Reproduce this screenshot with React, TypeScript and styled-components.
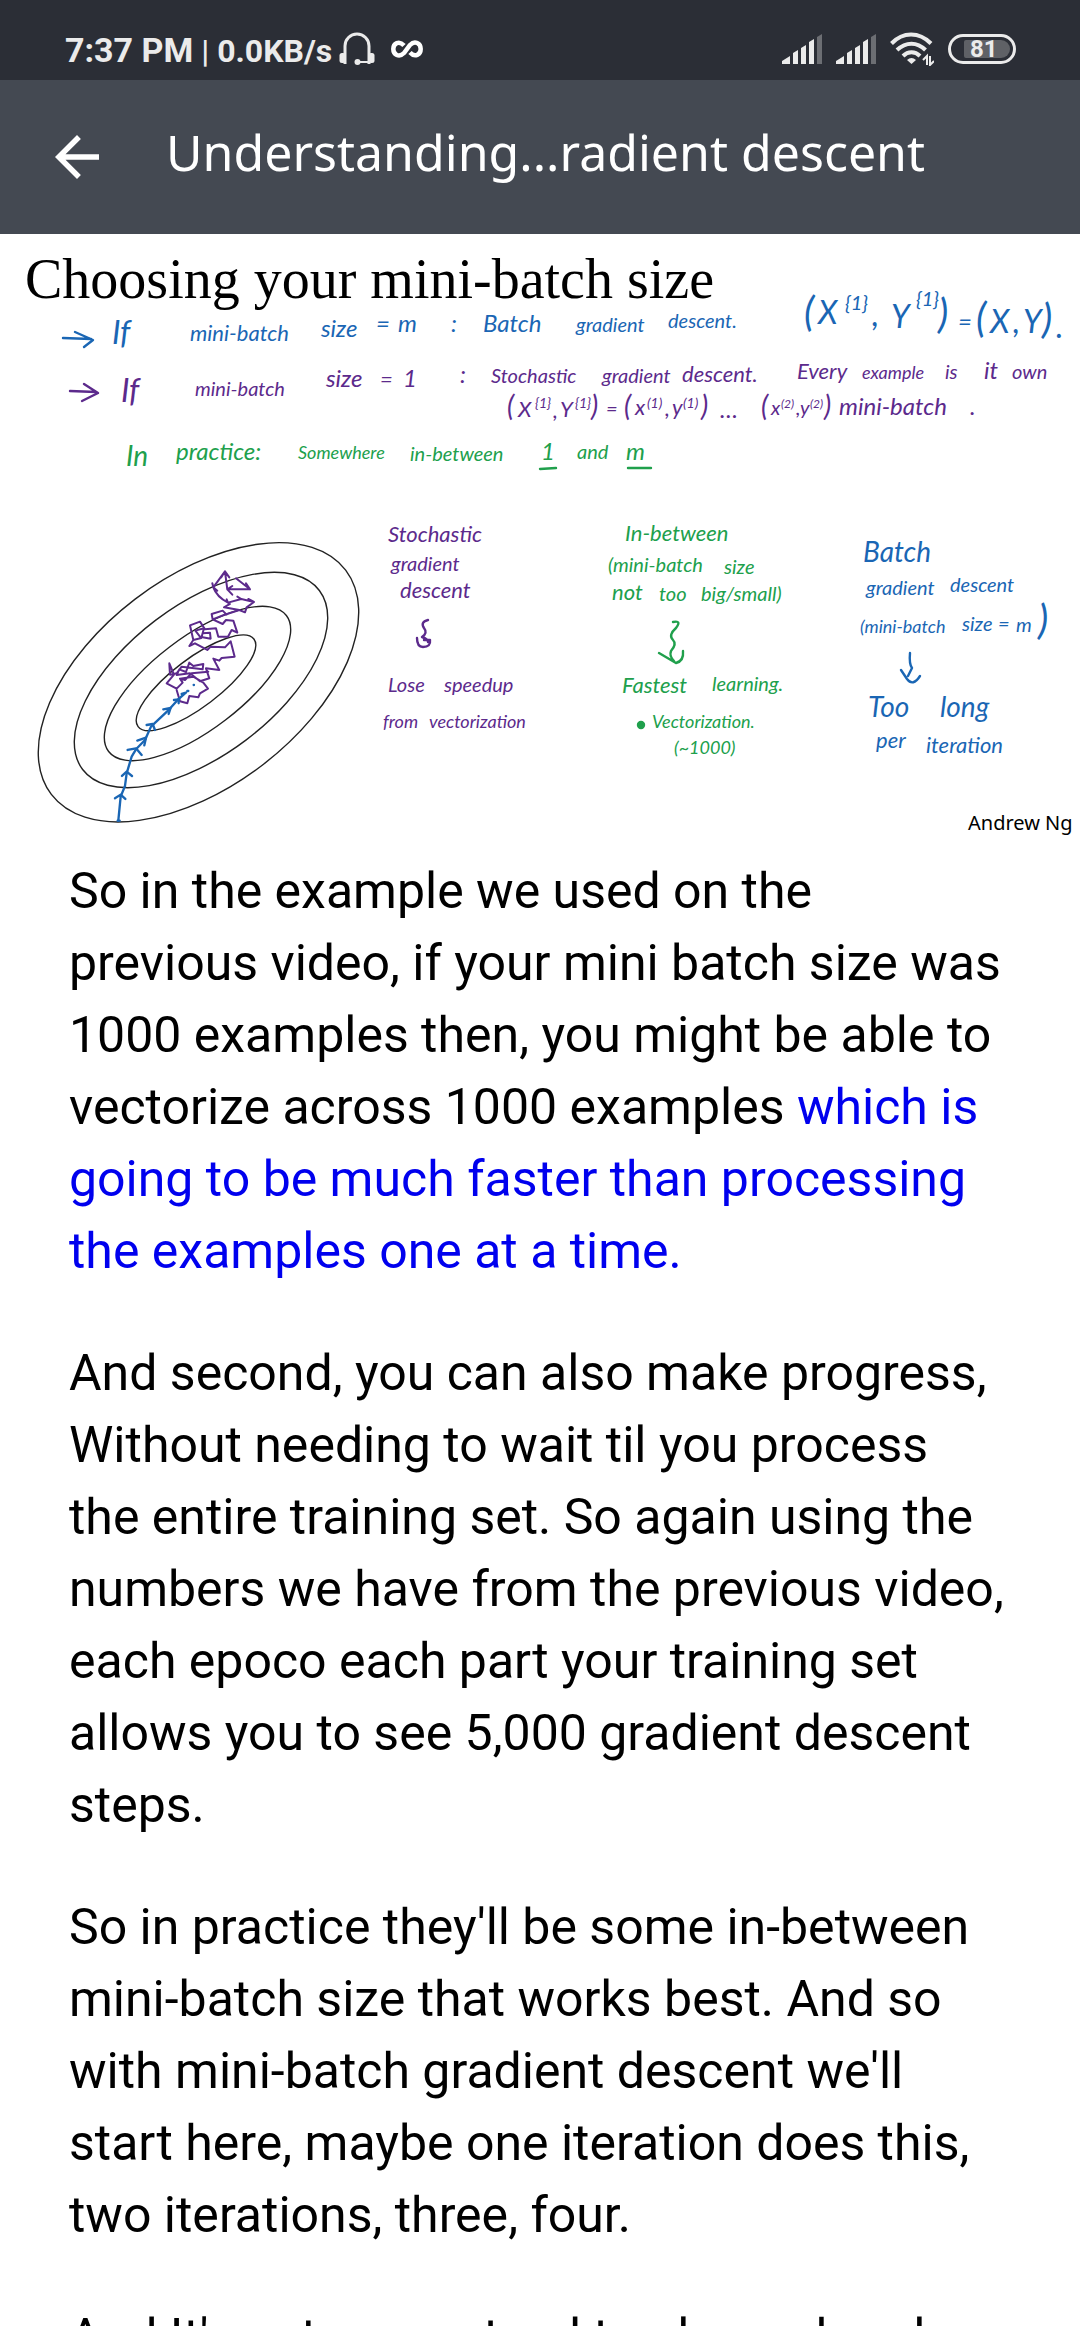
import React from "react";
import styled, { createGlobalStyle } from "styled-components";

const GlobalStyle = createGlobalStyle`
  * { box-sizing: border-box; }
  body { margin: 0; background: #ffffff; }
`;

const Screen = styled.div`
  display: flex;
  flex-direction: column;
  height: 100vh;
  padding-bottom: 14px;
  background: #ffffff;
  font-family: Roboto, "Noto Sans", sans-serif;
  color: #000000;
`;

const StatusBar = styled.div`
  flex: none;
  display: flex;
  justify-content: space-between;
  align-items: center;
  height: 80px;
  padding: 18px 64px 0 65px;
  background: #2b2e36;
  color: #ebebeb;
`;

const StatusGroup = styled.div<{ $gap: number }>`
  display: flex;
  align-items: center;
  gap: ${(p) => p.$gap}px;
`;

const Clock = styled.span`
  display: flex;
  align-items: baseline;
  gap: 8px;
  padding-top: 2px;
  font-size: 34px;
  line-height: 40px;
  font-weight: 700;
  white-space: nowrap;
`;

const Rate = styled.span`
  font-size: 32px;
`;

const Divider = styled.span`
  font-size: 32px;
  font-weight: 500;
`;

const Battery = styled.div`
  display: flex;
  align-items: center;
  justify-content: flex-end;
  width: 68px;
  height: 30px;
  padding-right: 3px;
  border: 3px solid #ebebeb;
  border-radius: 15px;
`;

const BatteryLevel = styled.span`
  width: 46px;
  height: 18px;
  padding-left: 6px;
  border-radius: 2px 9px 9px 2px;
  background: #5f6166;
  font-size: 24px;
  line-height: 18px;
  font-weight: 700;
`;

const AppBar = styled.header`
  flex: none;
  display: flex;
  align-items: center;
  gap: 56px;
  height: 154px;
  padding: 0 44px;
  background: #444952;
  color: #ffffff;
`;

const BackButton = styled.button`
  display: flex;
  padding: 0;
  border: 0;
  background: none;
  color: inherit;
`;

const Title = styled.h1`
  margin: 0;
  padding-bottom: 10px;
  font: 400 50px/68px "Noto Sans", "Open Sans", sans-serif;
  white-space: nowrap;
`;

const Content = styled.main`
  flex: 1;
  min-height: 0;
  overflow: hidden;
`;

const Slide = styled.svg`
  display: block;
  width: 100%;
  height: auto;
`;

const SlideTitle = styled.text`
  font: 56px "Liberation Serif", serif;
`;

const SlideAuthor = styled.text`
  font: 20px "Noto Sans", sans-serif;
`;

const Note = styled.text<{ $size: number }>`
  font: italic 400 ${(p) => p.$size}px Lato, "Open Sans", sans-serif;
`;

const Article = styled.article`
  padding: 13px 73px 0 69px;
  font-size: 50px;
  line-height: 72px;
`;

const Paragraph = styled.p`
  margin: 0 0 50px;
`;

const Highlight = styled.span`
  color: #0000ee;
`;

const BLUE = "#1a66b4";
const PURPLE = "#5c2a8c";
const GREEN = "#20a04c";

type Word = [text: string, x: number, y: number, size: number];

const blueNotes: Word[] = [
  ["If", 112, 110, 32],
  ["mini-batch", 190, 107, 22],
  ["size", 321, 103, 24],
  ["=", 376, 98, 24],
  ["m", 398, 98, 24],
  [":", 451, 98, 24],
  ["Batch", 483, 98, 24],
  ["gradient", 576, 98, 20],
  ["descent.", 668, 94, 20],
  ["(", 804, 92, 40],
  ["X", 818, 90, 32],
  ["{1}", 845, 76, 20],
  [",", 872, 92, 32],
  ["Y", 891, 94, 32],
  ["{1}", 916, 72, 20],
  [")", 938, 94, 40],
  ["=", 958, 96, 24],
  ["(", 976, 98, 40],
  ["X", 990, 99, 32],
  [",", 1013, 99, 32],
  ["Y", 1023, 99, 32],
  [")", 1042, 99, 40],
  [".", 1056, 104, 32],
  ["Batch", 863, 328, 28],
  ["gradient", 866, 361, 20],
  ["descent", 950, 358, 20],
  ["(mini-batch", 860, 399, 18],
  ["size", 962, 397, 20],
  ["=", 998, 397, 20],
  ["m", 1016, 398, 20],
  [")", 1038, 400, 40],
  ["Too", 868, 483, 28],
  ["long", 940, 483, 28],
  ["per", 876, 514, 22],
  ["iteration", 926, 519, 22],
];

const purpleNotes: Word[] = [
  ["If", 121, 168, 32],
  ["mini-batch", 195, 162, 20],
  ["size", 326, 153, 24],
  ["=", 380, 153, 22],
  ["1", 403, 153, 24],
  [":", 460, 149, 24],
  ["Stochastic", 491, 149, 20],
  ["gradient", 602, 149, 20],
  ["descent.", 682, 148, 22],
  ["Every", 797, 145, 22],
  ["example", 862, 145, 18],
  ["is", 945, 145, 20],
  ["it", 984, 145, 24],
  ["own", 1012, 145, 20],
  ["(", 507, 182, 28],
  ["X", 518, 183, 22],
  ["{1}", 535, 174, 14],
  [",", 553, 184, 22],
  ["Y", 560, 183, 22],
  ["{1}", 575, 174, 14],
  [")", 591, 182, 28],
  ["=", 606, 182, 20],
  ["(", 624, 182, 28],
  ["x", 635, 181, 22],
  ["(1)", 647, 174, 14],
  [",", 665, 182, 22],
  ["y", 672, 181, 22],
  ["(1)", 683, 174, 14],
  [")", 701, 182, 28],
  ["…", 720, 184, 24],
  ["(", 761, 182, 28],
  ["x", 771, 181, 20],
  ["(2)", 781, 174, 12],
  [",", 796, 181, 20],
  ["y", 800, 181, 20],
  ["(2)", 810, 174, 12],
  [")", 824, 182, 28],
  ["mini-batch", 839, 181, 24],
  [".", 970, 181, 24],
  ["Stochastic", 388, 308, 22],
  ["gradient", 391, 337, 20],
  ["descent", 400, 364, 22],
  ["Lose", 388, 458, 20],
  ["speedup", 444, 458, 20],
  ["from", 383, 494, 18],
  ["vectorization", 429, 494, 18],
];

const greenNotes: Word[] = [
  ["In", 126, 232, 28],
  ["practice:", 176, 226, 24],
  ["Somewhere", 298, 225, 18],
  ["in-between", 410, 227, 20],
  ["1", 541, 226, 24],
  ["and", 577, 225, 20],
  ["m", 626, 226, 24],
  ["In-between", 625, 307, 22],
  ["(mini-batch", 608, 338, 20],
  ["size", 724, 340, 20],
  ["not", 612, 366, 22],
  ["too", 659, 367, 20],
  ["big/small)", 701, 367, 20],
  ["Fastest", 622, 459, 22],
  ["learning.", 712, 457, 20],
  ["Vectorization.", 652, 494, 18],
  ["(~1000)", 674, 520, 18],
];

function Notes({ words, color }: { words: Word[]; color: string }) {
  return (
    <g fill={color}>
      {words.map(([text, x, y, size]) => (
        <Note key={`${x}-${y}`} x={x} y={y} $size={size}>
          {text}
        </Note>
      ))}
    </g>
  );
}

function LectureSlide() {
  return (
    <Slide viewBox="0 0 1080 608">
      <SlideTitle x="25" y="64">Choosing your mini-batch size</SlideTitle>
      <Notes words={blueNotes} color={BLUE} />
      <Notes words={purpleNotes} color={PURPLE} />
      <Notes words={greenNotes} color={GREEN} />
      <g fill="none" strokeWidth="2.4" strokeLinecap="round" strokeLinejoin="round">
        <g stroke={BLUE}>
          <path d="M63 104L91 105M75 98L93 106L84 113" />
          <path d="M910 419Q909 430 912 434L908 442M901 436L907 445Q913 453 920 442" />
        </g>
        <g stroke={PURPLE}>
          <path d="M70 157L96 158M84 150L98 159L82 167" />
          <path d="M428 386Q420 388 424 394Q428 399 422 403Q428 405 428 408M417 404Q417 413 423 413Q431 413 430 406H424" />
        </g>
        <g stroke={GREEN}>
          <path d="M673 388Q682 386 676 394Q668 401 673 406Q677 410 671 417Q669 422 674 427M659 419L676 429Q684 427 683 417" />
          <path d="M540 235L556 234M628 234H651" />
          <circle cx="641" cy="491" r="3" fill={GREEN} />
        </g>
        <g stroke="#222222" strokeWidth="1.4">
          <ellipse cx="198.5" cy="448.3" rx="185" ry="104.6" transform="rotate(-37.3 198.5 448.3)" />
          <ellipse cx="201" cy="446" rx="148.4" ry="75" transform="rotate(-37.1 201 446)" />
          <ellipse cx="197.5" cy="449.5" rx="111.9" ry="46" transform="rotate(-37.4 197.5 449.5)" />
          <ellipse cx="196" cy="448.8" rx="72.6" ry="24.1" transform="rotate(-37.1 196 448.8)" />
        </g>
        <g transform="translate(0 266) scale(0.3333)" strokeWidth="7">
          <path
            stroke={PURPLE}
            strokeWidth="6"
            d="M708 235L750 268L738 250M750 268L682 268L697 258M682 268L697 284M682 268L675 214L664 232M675 214L688 232M675 214L640 262L637 250M640 262L652 272M640 262Q650 290 684 308L680 298M684 308L724 297L712 290M724 297L762 306L745 297M762 306L740 322L735 337L718 330L672 322L690 312M718 330L672 345L638 358L635 342L668 332L680 344M638 358L668 372L678 360L700 362L712 398L695 390L684 410L655 410L648 385L615 388L600 365L570 376L580 420L604 414L612 385L586 392L600 410L632 416L630 398L608 400M580 420L568 438L585 430L622 450L632 440L675 442L692 424L704 470L665 474L658 482L640 476L658 510L618 505L628 535L600 544L570 520L530 525L538 508L558 516L568 488L580 498L610 492L608 508L545 500L530 520L510 524L508 490L522 524L500 550L530 566L548 548L540 536L580 530L610 548L624 566L600 580L595 592L568 588L562 610L540 604L530 570M540 536L555 540L575 520L625 515"
          />
          <path stroke={BLUE} d="M355 962L362 890L375 858L380 820L395 770L408 748L435 720L453 680L508 628L533 600L555 580" />
          <path
            stroke={BLUE}
            d="M345 895L362 884L376 897M366 828L380 815L396 828M383 750L408 745L425 765M412 722L438 713L433 736M440 675L458 672L465 690M490 628L512 624L506 642M522 600L536 598L536 610M545 582L558 578M581 555h1M562 573h3M353 962h6"
          />
        </g>
      </g>
      <SlideAuthor x="968" y="596">Andrew Ng</SlideAuthor>
    </Slide>
  );
}

function HeadsetIcon() {
  return (
    <svg width="36" height="34" viewBox="0 0 36 34" fill="none" stroke="#ebebeb" strokeWidth="3">
      <path d="M6 32V14a12 12 0 0 1 24 0V32" />
      <path d="M18 30H31" strokeWidth="2" />
      <circle cx="18.500" cy="30" r="3" fill="#ebebeb" stroke="none" />
      <rect x="0.500" y="21" width="6" height="10" rx="2.500" fill="#ebebeb" stroke="none" />
      <rect x="29.500" y="21" width="6" height="10" rx="2.500" fill="#ebebeb" stroke="none" />
    </svg>
  );
}

function InfinityIcon() {
  return (
    <svg width="32" height="18" viewBox="0 0 32 18" fill="none" stroke="#ffffff" strokeWidth="4.500">
      <path d="M13 5.500C8 0 2.300 3.500 2.300 9s5.700 9 10.700 4L19 5c5-5 10.700-1.500 10.700 4s-5.700 9-10.700 3.500" />
    </svg>
  );
}

function SignalIcon() {
  return (
    <svg width="40" height="30" viewBox="0 0 40 30" fill="#ebebeb">
      <path d="M0 30V27L8 22V30ZM11 30V19L16 16V30ZM19 30V14L24 11V30ZM27 30V8L32 5V30Z" />
      <path d="M35 30V3L40 0V30Z" fill="#6c6e73" />
    </svg>
  );
}

function WifiIcon() {
  return (
    <svg width="44" height="34" viewBox="0 0 44 34" fill="none" stroke="#ebebeb" strokeWidth="4">
      <path d="M1.500 11.500C13-.5 29-.5 41 11.500M7 18C16 9.500 27 9.500 35.500 18M13 24C18 19 25 19 30 24" />
      <path d="M17 28q4.500-4 9 0l-4.500 4z" fill="#ebebeb" stroke="none" />
      <path d="M37 33V24l-4 4M40 24v9l4-4" strokeWidth="2" />
    </svg>
  );
}

export default function App() {
  return (
    <>
      <GlobalStyle />
      <Screen>
        <StatusBar>
          <StatusGroup $gap={16}>
            <StatusGroup $gap={7}>
              <Clock>
                7:37 PM
                <Divider>|</Divider>
                <Rate>0.0KB/s</Rate>
              </Clock>
              <HeadsetIcon />
            </StatusGroup>
            <InfinityIcon />
          </StatusGroup>
          <StatusGroup $gap={14}>
            <SignalIcon />
            <SignalIcon />
            <WifiIcon />
            <Battery>
              <BatteryLevel>81</BatteryLevel>
            </Battery>
          </StatusGroup>
        </StatusBar>
        <AppBar>
          <BackButton type="button" aria-label="Back">
            <svg width="66" height="66" viewBox="0 0 24 24" fill="currentColor">
              <path d="M20 11H7.830l5.590-5.590L12 4l-8 8 8 8 1.410-1.410L7.830 13H20v-2z" />
            </svg>
          </BackButton>
          <Title>Understanding...radient descent</Title>
        </AppBar>
        <Content>
          <LectureSlide />
          <Article>
            <Paragraph>
              So in the example we used on the previous video, if your mini batch size was 1000
              examples then, you might be able to vectorize across 1000 examples{" "}
              <Highlight>
                which is going to be much faster than processing the examples one at a time.
              </Highlight>
            </Paragraph>
            <Paragraph>
              And second, you can also make progress, Without needing to wait til you process the
              entire training set. So again using the numbers we have from the previous video, each
              epoco each part your training set allows you to see 5,000 gradient descent steps.
            </Paragraph>
            <Paragraph>
              So in practice they'll be some in-between mini-batch size that works best. And so with
              mini-batch gradient descent we'll start here, maybe one iteration does this, two
              iterations, three, four.
            </Paragraph>
            <Paragraph>And It's not guaranteed to always head</Paragraph>
          </Article>
        </Content>
      </Screen>
    </>
  );
}
